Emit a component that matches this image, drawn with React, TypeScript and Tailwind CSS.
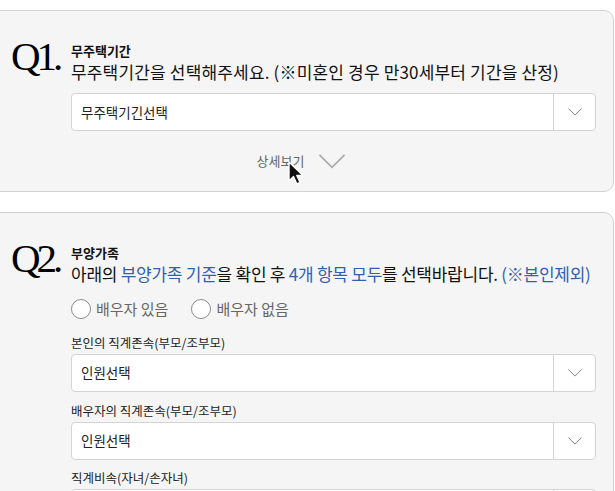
import { useState } from 'react'

const kr = { fontFamily: '"Noto Sans CJK KR", "Noto Sans", sans-serif' }
const serif = { fontFamily: '"Liberation Serif", "DejaVu Serif", serif' }

function Chevron({ className = '' }: { className?: string }) {
  return (
    <svg viewBox="0 0 16 9" className={className} fill="none">
      <path d="M0.5 0.5 L8 8 L15.5 0.5" stroke="currentColor" strokeWidth="1" />
    </svg>
  )
}

function SelectBox({ value }: { value: string }) {
  return (
    <div className="flex h-[38px] w-[525px] rounded-[4px] border border-[#d4d4d4] bg-white">
      <div className="flex flex-1 items-center pl-[9px] text-[13.5px] text-[#222]">{value}</div>
      <div className="flex w-[42px] items-center justify-center border-l border-[#d4d4d4] text-[#777]">
        <Chevron className="h-[8px] w-[16px]" />
      </div>
    </div>
  )
}

function QNum({ n }: { n: string }) {
  return (
    <div
      className="mt-[-7px] w-[70px] shrink-0 pl-[10px] text-[41px] leading-none tracking-[-0.1em] text-black"
      style={serif}
    >
      {n}
    </div>
  )
}

function Cursor() {
  return (
    <svg viewBox="0 0 20 26" className="absolute left-[298px] top-[150px] h-[26px] w-[20px]">
      <path d="M2 1 L2 20 L6.5 15.5 L9.8 23 L13 21.5 L9.8 14.5 L16 14.5 Z" fill="#111" stroke="#fff" strokeWidth="1.4" strokeLinejoin="round" />
    </svg>
  )
}

export default function App() {
  const [spouse, setSpouse] = useState<string | null>(null)

  return (
    <div className="relative min-h-screen w-[615px] overflow-hidden bg-white pt-[10px]" style={kr}>
      {/* Q1 */}
      <div className="relative ml-[-12px] mr-[1px] h-[182px] rounded-[10px] border border-[#d2d2d2] bg-[#f5f5f5] pl-[12px]">
        <div className="flex pt-[32px]">
          <QNum n="Q1." />
          <div className="flex flex-col">
            <p className="text-[13px] font-bold leading-[16px] text-[#111]">무주택기간</p>
            <p className="mt-[1px] whitespace-nowrap text-[17px] leading-[23px] tracking-[0.01em] text-[#111]">
              무주택기간을 선택해주세요. (※미혼인 경우 만30세부터 기간을 산정)
            </p>
            <div className="mt-[10px]">
              <SelectBox value="무주택기긴선택" />
            </div>
            <div className="mt-[20px] flex items-center justify-center gap-[13px] pr-[63px] text-[13px] text-[#666]">
              <span>상세보기</span>
              <Chevron className="mt-[2px] h-[15px] w-[30px] text-[#aaa]" />
            </div>
          </div>
        </div>
        <Cursor />
      </div>

      {/* Q2 */}
      <div className="ml-[-12px] mr-[1px] mt-[20px] h-[300px] rounded-[10px] border border-[#d2d2d2] bg-[#f5f5f5] pl-[12px]">
        <div className="flex pt-[32px]">
          <QNum n="Q2." />
          <div className="flex flex-col">
            <p className="text-[13px] font-bold leading-[16px] text-[#111]">부양가족</p>
            <p className="mt-[1px] whitespace-nowrap text-[17px] leading-[23px] tracking-[-0.015em] text-[#111]">
              아래의 <span className="text-[#2f5fb5]">부양가족 기준</span>을 확인 후{' '}
              <span className="text-[#2f5fb5]">4개 항목 모두</span>를 선택바랍니다.{' '}
              <span className="text-[#2f5fb5]">(※본인제외)</span>
            </p>
            <div className="mt-[13px] flex items-center gap-[23px] text-[15px] text-[#666]">
              {['배우자 있음', '배우자 없음'].map(label => (
                <label key={label} className="flex cursor-pointer items-center gap-[5px]" onClick={() => setSpouse(label)}>
                  <span className="flex h-[20px] w-[20px] items-center justify-center rounded-full border border-[#8a8a8a] bg-white">
                    {spouse === label && <span className="h-[10px] w-[10px] rounded-full bg-[#2f5fb5]" />}
                  </span>
                  {label}
                </label>
              ))}
            </div>
            <p className="mt-[14px] text-[12.5px] leading-[16px] text-[#222]">본인의 직계존속(부모/조부모)</p>
            <div className="mt-[3px]">
              <SelectBox value="인원선택" />
            </div>
            <p className="mt-[11px] text-[12.5px] leading-[16px] text-[#222]">배우자의 직계존속(부모/조부모)</p>
            <div className="mt-[3px]">
              <SelectBox value="인원선택" />
            </div>
            <p className="mt-[10px] text-[12.5px] leading-[16px] text-[#222]">직계비속(자녀/손자녀)</p>
            <div className="mt-[3px]">
              <SelectBox value="인원선택" />
            </div>
          </div>
        </div>
      </div>
    </div>
  )
}
